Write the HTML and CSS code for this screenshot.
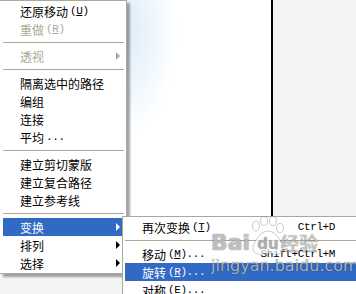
FILE: index.html
```html
<!DOCTYPE html>
<html lang="zh-CN">
<head>
    <meta charset="UTF-8">
    <meta name="viewport" content="width=device-width, initial-scale=1.0">
    <title>变换菜单</title>
    <link rel="stylesheet" href="styles.css">
</head>
<body>
    <div class="workspace">
        <div class="side"></div>
        <div class="canvas"></div>
        <div class="panel"></div>
    </div>

    <!-- 主菜单 -->
    <ul class="menu main-menu">
        <li class="item">还原移动<span class="mono">(<u>U</u>)</span></li>
        <li class="item disabled">重做<span class="mono">(<u>R</u>)</span></li>
        <li class="sep"></li>
        <li class="item disabled has-sub">透视<i class="arrow"></i></li>
        <li class="sep"></li>
        <li class="item">隔离选中的路径</li>
        <li class="item">编组</li>
        <li class="item">连接</li>
        <li class="item">平均<span class="mono">...</span></li>
        <li class="sep"></li>
        <li class="item">建立剪切蒙版</li>
        <li class="item">建立复合路径</li>
        <li class="item">建立参考线</li>
        <li class="sep"></li>
        <li class="item active has-sub">变换<i class="arrow"></i></li>
        <li class="item has-sub">排列<i class="arrow"></i></li>
        <li class="item has-sub">选择<i class="arrow"></i></li>
    </ul>

    <!-- 子菜单 -->
    <ul class="menu sub-menu">
        <li class="item">再次变换<span class="mono">(<u>T</u>)</span><span class="shortcut">Ctrl+D</span></li>
        <li class="sep"></li>
        <li class="item">移动<span class="mono">(<u>M</u>)...</span><span class="shortcut">Shift+Ctrl+M</span></li>
        <li class="item active">旋转<span class="mono">(<u>R</u>)...</span></li>
        <li class="item">对称<span class="mono">(<u>E</u>)...</span></li>
    </ul>

    <div class="watermark">
        <div class="logo">
            <span class="bai">Bai</span>
            <svg class="paw" width="40" height="40" viewBox="0 0 40 40">
                <ellipse cx="8" cy="10" rx="3.5" ry="5"/>
                <ellipse cx="16" cy="5" rx="3.5" ry="4.5"/>
                <ellipse cx="25" cy="5" rx="3.5" ry="4.5"/>
                <ellipse cx="32" cy="12" rx="3.5" ry="4.5"/>
                <path d="M20 15 C12 15 6 26 5 31 C4 37 10 39 14 38 C17 37 23 37 26 38 C31 39 36 37 35 31 C34 26 28 15 20 15 Z"/>
                <text x="20" y="33" text-anchor="middle">du</text>
            </svg>
            <span class="jy">经验</span>
        </div>
        <div class="url">jingyan.baidu.com</div>
    </div>
</body>
</html>
```

FILE: styles.css
```css
/* 页面背景 */
body {
    margin: 0;
    background-color: #f3f3f3;
    font-family: "Noto Sans CJK SC", sans-serif;
    font-size: 12px;
    overflow: hidden;
}

.workspace {
    display: flex;
    height: 294px;
}

.side {
    width: 127px;
}

.canvas {
    width: 144px;
    border-right: 2px solid #000;
    background: radial-gradient(ellipse 50px 105px at 0 30px, #dcedfa 0%, rgba(220, 237, 250, 0) 100%), #fff;
}

.panel {
    flex: 1;
}

/* 菜单 */
.menu {
    position: absolute;
    margin: 0;
    list-style: none;
    background-color: #fff;
    border: 1px solid #aca899;
    box-shadow: 3px 3px 2px rgba(0, 0, 0, 0.35);
    box-sizing: border-box;
}

.main-menu {
    left: 0;
    top: 0;
    width: 127px;
    border-left: none;
    padding: 1px 2px 1px 3px;
}

.sub-menu {
    left: 122px;
    top: 216px;
    width: 240px;
    padding: 1px 2px;
}

.item {
    display: flex;
    align-items: center;
    height: 18px;
    padding: 0 4px 0 17px;
    color: #000;
    white-space: nowrap;
}

.sub-menu .item {
    padding-right: 24px;
}

.item.active {
    background-color: #316ac5;
    color: #fff;
}

.item.disabled {
    color: #aca899;
}

.sep {
    height: 1px;
    margin: 4px 0;
    background-color: #aca899;
}

.mono,
.shortcut {
    font-family: "Liberation Mono", monospace;
    font-size: 11px;
    letter-spacing: -0.4px;
}

.mono {
    margin-left: 2px;
}

.mono u {
    text-underline-offset: 1px;
}

.shortcut {
    margin-left: auto;
}

.arrow {
    margin-left: auto;
    width: 0;
    height: 0;
    border-left: 4px solid currentColor;
    border-top: 4px solid transparent;
    border-bottom: 4px solid transparent;
}

/* 水印 */
.watermark {
    position: absolute;
    left: 211px;
    top: 214px;
    color: rgba(255, 255, 255, 0.65);
    text-shadow: 0 0 1px rgba(0, 0, 0, 0.55), 0 0 1px rgba(0, 0, 0, 0.3);
    pointer-events: none;
}

.logo {
    display: flex;
    align-items: flex-end;
    height: 42px;
}

.bai {
    font-family: "DejaVu Sans", sans-serif;
    font-weight: bold;
    font-size: 22px;
    line-height: 26px;
}

.paw {
    margin-left: -2px;
    fill: rgba(255, 255, 255, 0.65);
    stroke: rgba(0, 0, 0, 0.25);
    stroke-width: 0.8;
}

.paw text {
    font-family: "DejaVu Sans", sans-serif;
    font-weight: bold;
    font-size: 15px;
    fill: rgba(190, 190, 190, 0.55);
    stroke: none;
}

.jy {
    font-family: "Noto Sans CJK SC", sans-serif;
    font-size: 19px;
    line-height: 26px;
    margin-left: -8px;
}

.url {
    font-family: "DejaVu Sans", sans-serif;
    font-size: 16px;
    line-height: 20px;
}
```
